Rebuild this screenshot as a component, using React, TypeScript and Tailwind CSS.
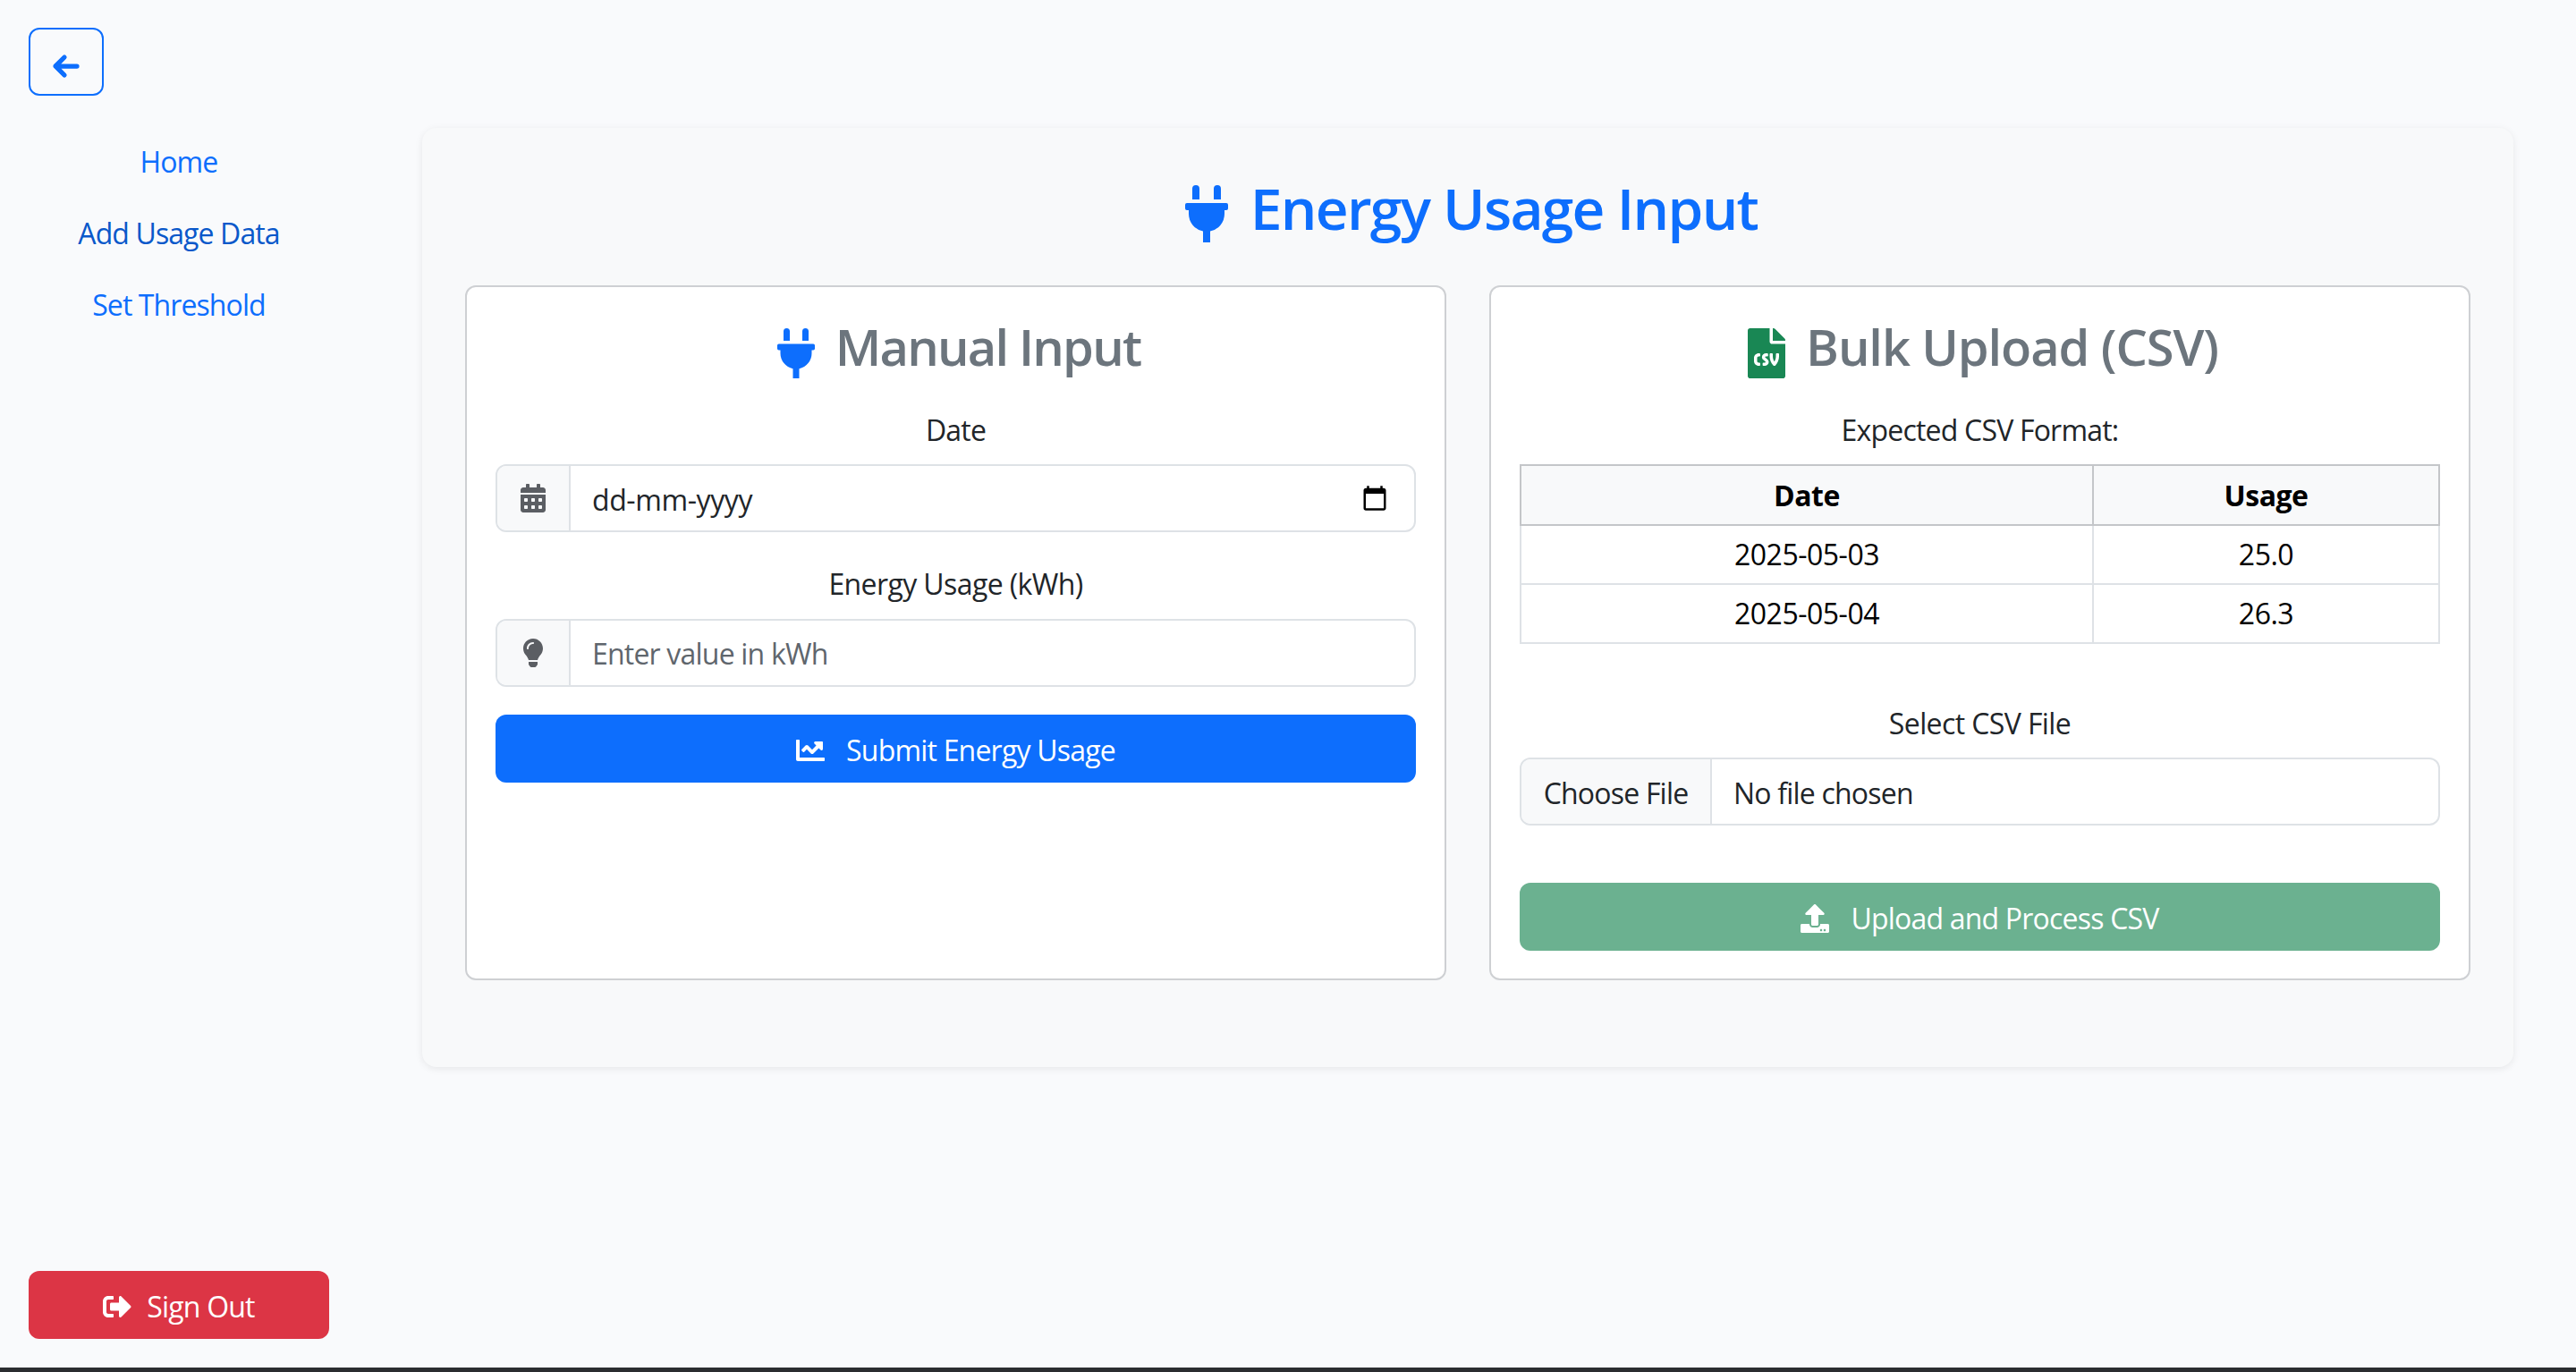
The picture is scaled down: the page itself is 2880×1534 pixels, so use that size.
import { FaCalendarAlt, FaChartLine, FaFileCsv, FaLightbulb, FaPlug, FaSignOutAlt, FaUpload } from 'react-icons/fa'
import { FaArrowLeft } from 'react-icons/fa6'

const navItems = [
  { label: 'Home', color: 'text-[#0d6efd]' },
  { label: 'Add Usage Data', color: 'text-[#0a58ca]' },
  { label: 'Set Threshold', color: 'text-[#0d6efd]' },
]

const rows = [
  { date: '2025-05-03', usage: '25.0' },
  { date: '2025-05-04', usage: '26.3' },
]

const Sidebar = () => (
  <aside className="flex h-full w-[400px] shrink-0 flex-col px-[32px] pt-[31px] pb-[32px]">
    <button type="button" className="flex h-[76px] w-[84px] items-center justify-center rounded-[12px] border-2 border-[#0d6efd] pt-[10px] text-[#0d6efd]">
      <FaArrowLeft size={32} stroke="currentColor" strokeWidth={20} />
    </button>
    <nav className="mt-[34px] flex flex-col tracking-[-0.9px]">
      {navItems.map((item) => (
        <a key={item.label} href="#" className={`flex h-[80px] items-center justify-center ${item.color}`}>
          {item.label}
        </a>
      ))}
    </nav>
    <button type="button" className="mt-auto flex h-[76px] w-full items-center justify-center gap-[17px] rounded-[12px] bg-[#dc3545] pt-[4px] text-white">
      <FaSignOutAlt size={32} />
      Sign Out
    </button>
  </aside>
)

const Label = ({ text, className }: { text: string; className?: string }) => (
  <div className={`h-[48px] text-center leading-[50px] text-[#212529] ${className ?? ''}`}>{text}</div>
)

const ManualCard = () => (
  <section className="rounded-[12px] border-2 border-[#ced0d3] bg-white px-[32px] pt-[32px]">
    <h3 className="flex h-[67px] items-center justify-center gap-[16px] text-[56px] font-semibold tracking-[-1.8px] text-[#6c757d]">
      <FaPlug size={56} className="mt-[17px] text-[#0d6efd]" />
      Manual Input
    </h3>
    <Label text="Date" className="mt-[36px]" />
    <div className="mt-[15px] flex h-[76px] overflow-hidden rounded-[12px] border-2 border-[#dee2e6]">
      <div className="flex w-[82px] items-center justify-center border-r-2 border-[#dee2e6] bg-[#f8f9fa] text-[#5b5e63]">
        <FaCalendarAlt size={32} />
      </div>
      <div className="flex flex-1 items-center justify-between pl-[24px] pr-[29px] text-[#212529]">
        <span className="pt-[3px] tracking-[-0.4px]">dd-mm-yyyy</span>
        <svg width="30" height="30" viewBox="0 0 24 24" fill="#000">
          <path d="M20 3h-1V1h-2v2H7V1H5v2H4c-1.1 0-2 .9-2 2v16c0 1.1.9 2 2 2h16c1.1 0 2-.9 2-2V5c0-1.1-.9-2-2-2zm0 18H4V8h16v13z" />
        </svg>
      </div>
    </div>
    <Label text="Energy Usage (kWh)" className="mt-[33px] tracking-[-0.6px]" />
    <div className="mt-[16px] flex h-[76px] overflow-hidden rounded-[12px] border-2 border-[#dee2e6]">
      <div className="flex w-[82px] items-center justify-center border-r-2 border-[#dee2e6] bg-[#f8f9fa] text-[#5b5e63]">
        <FaLightbulb size={32} />
      </div>
      <input className="min-w-0 flex-1 pl-[24px] pr-[24px] pt-[2px] outline-none placeholder:text-[#5f666d]" placeholder="Enter value in kWh" />
    </div>
    <button type="button" className="mt-[31px] flex h-[76px] w-full items-center justify-center gap-[24px] rounded-[12px] bg-[#0d6efd] pt-[4px] text-white">
      <FaChartLine size={32} />
      Submit Energy Usage
    </button>
  </section>
)

const BulkCard = () => (
  <section className="rounded-[12px] border-2 border-[#ced0d3] bg-white px-[32px] pt-[32px]">
    <h3 className="flex h-[67px] items-center justify-center gap-[16px] text-[56px] font-semibold tracking-[-1.1px] text-[#6c757d]">
      <FaFileCsv size={56} className="mt-[17px] text-[#198754]" />
      Bulk Upload (CSV)
    </h3>
    <Label text="Expected CSV Format:" className="mt-[36px]" />
    <table className="mt-[15px] w-full table-fixed border-collapse text-center tracking-[-0.5px] text-black">
      <thead>
        <tr className="h-[67px] bg-[#f8f9fa]">
          <th className="w-[640px] border-2 border-[#c4c6c9] font-bold">Date</th>
          <th className="border-2 border-[#c4c6c9] font-bold">Usage</th>
        </tr>
      </thead>
      <tbody>
        {rows.map((row) => (
          <tr key={row.date} className="h-[66px]">
            <td className="border-2 border-[#dee2e6]">{row.date}</td>
            <td className="border-2 border-[#dee2e6]">{row.usage}</td>
          </tr>
        ))}
      </tbody>
    </table>
    <Label text="Select CSV File" className="mt-[64px] tracking-[-0.6px]" />
    <div className="mt-[15px] flex h-[76px] overflow-hidden rounded-[12px] border-2 border-[#dee2e6] text-[#212529]">
      <div className="flex w-[213px] items-center justify-center border-r-2 border-[#dee2e6] bg-[#f8f9fa] pt-[3px]">Choose File</div>
      <div className="flex flex-1 items-center pl-[24px] pt-[3px]">No file chosen</div>
    </div>
    <button type="button" className="mt-[64px] flex h-[76px] w-full items-center justify-center gap-[24px] rounded-[12px] bg-[#6bb190] pt-[4px] text-white">
      <FaUpload size={32} />
      Upload and Process CSV
    </button>
  </section>
)

export default function App() {
  return (
    <div className="flex h-[1534px] flex-col bg-[#f9fafc] font-['Open_Sans','Noto_Sans',sans-serif] text-[32px] tracking-[-0.8px]">
      <div className="flex min-h-0 flex-1">
        <Sidebar />
        <main className="flex-1 pl-[72px] pr-[70px] pt-[143px]">
          <div className="h-[1050px] rounded-[16px] bg-[#f8f9fa] px-[48px] pt-[48px] shadow-[0_2px_8px_rgba(0,0,0,0.08)]">
            <h2 className="flex h-[77px] items-center justify-center gap-[17px] pt-[6px] text-[64px] font-semibold tracking-[-1.7px] text-[#0d6efd]">
              <FaPlug size={64} className="mt-[12px]" />
              Energy Usage Input
            </h2>
            <div className="mt-[51px] grid h-[777px] grid-cols-2 gap-[48px]">
              <ManualCard />
              <BulkCard />
            </div>
          </div>
        </main>
      </div>
      <div className="h-[5px] bg-[#2b2d30]" />
    </div>
  )
}
